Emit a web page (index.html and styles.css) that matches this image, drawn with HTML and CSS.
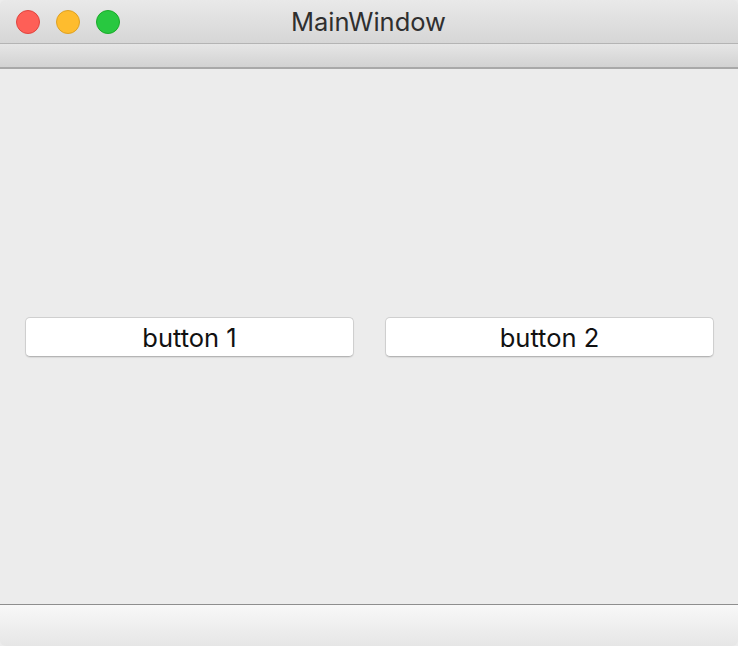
FILE: index.html
```html
<!DOCTYPE html>
<html>
<head>
<meta charset="utf-8">
<link rel="stylesheet" href="styles.css">
</head>
<body>
<div class="window">
  <div class="titlebar">
    <div class="lights">
      <span class="light red"></span>
      <span class="light yellow"></span>
      <span class="light green"></span>
    </div>
    <div class="title">MainWindow</div>
  </div>
  <div class="toolbar"></div>
  <div class="content">
    <button class="btn">button 1</button>
    <button class="btn">button 2</button>
  </div>
  <div class="statusbar"></div>
</div>
</body>
</html>
```
FILE: styles.css
```css
html, body {
  margin: 0;
  padding: 0;
  background: #ececec;
}
.window {
  width: 738px;
  height: 646px;
  display: flex;
  flex-direction: column;
  font-family: "Inter", "Noto Sans", "Liberation Sans", sans-serif;
  overflow: hidden;
  border-radius: 5px 5px 6px 6px;
  background: #ececec;
}
.titlebar {
  height: 43px;
  flex: none;
  display: flex;
  align-items: center;
  justify-content: center;
  position: relative;
  background: linear-gradient(#e9e9e9, #d6d6d6);
  border-bottom: 1px solid #b4b4b4;
}
.lights {
  position: absolute;
  left: 16px;
  top: 10px;
  display: flex;
  gap: 16px;
}
.light {
  width: 24px;
  height: 24px;
  border-radius: 50%;
  box-sizing: border-box;
}
.red { background: #fe5f57; border: 1px solid #e0443e; }
.yellow { background: #febc2e; border: 1px solid #dea123; }
.green { background: #28c840; border: 1px solid #1aab29; }
.title {
  font-size: 25.5px;
  color: #2f2f2f;
  margin-left: -1px;
}
.toolbar {
  height: 23px;
  flex: none;
  background: linear-gradient(#e6e6e6, #d2d2d2);
  border-bottom: 2px solid #a8a8a8;
}
.content {
  flex: 1;
  display: flex;
  align-items: center;
  gap: 31px;
  padding: 0 24px 0 25px;
}
.btn {
  flex: 1;
  height: 40px;
  margin-top: 1px;
  background: #ffffff;
  border: 1px solid #cfcfcf;
  border-bottom-color: #b5b5b5;
  border-radius: 5px;
  box-shadow: 0 1px 1px rgba(0,0,0,0.08);
  font-family: inherit;
  font-size: 25.5px;
  color: #111;
  padding: 0;
}
.statusbar {
  height: 41px;
  flex: none;
  border-top: 1px solid #8e8e8e;
  background: linear-gradient(#f8f8f8, #e6e6e6);
}
```
